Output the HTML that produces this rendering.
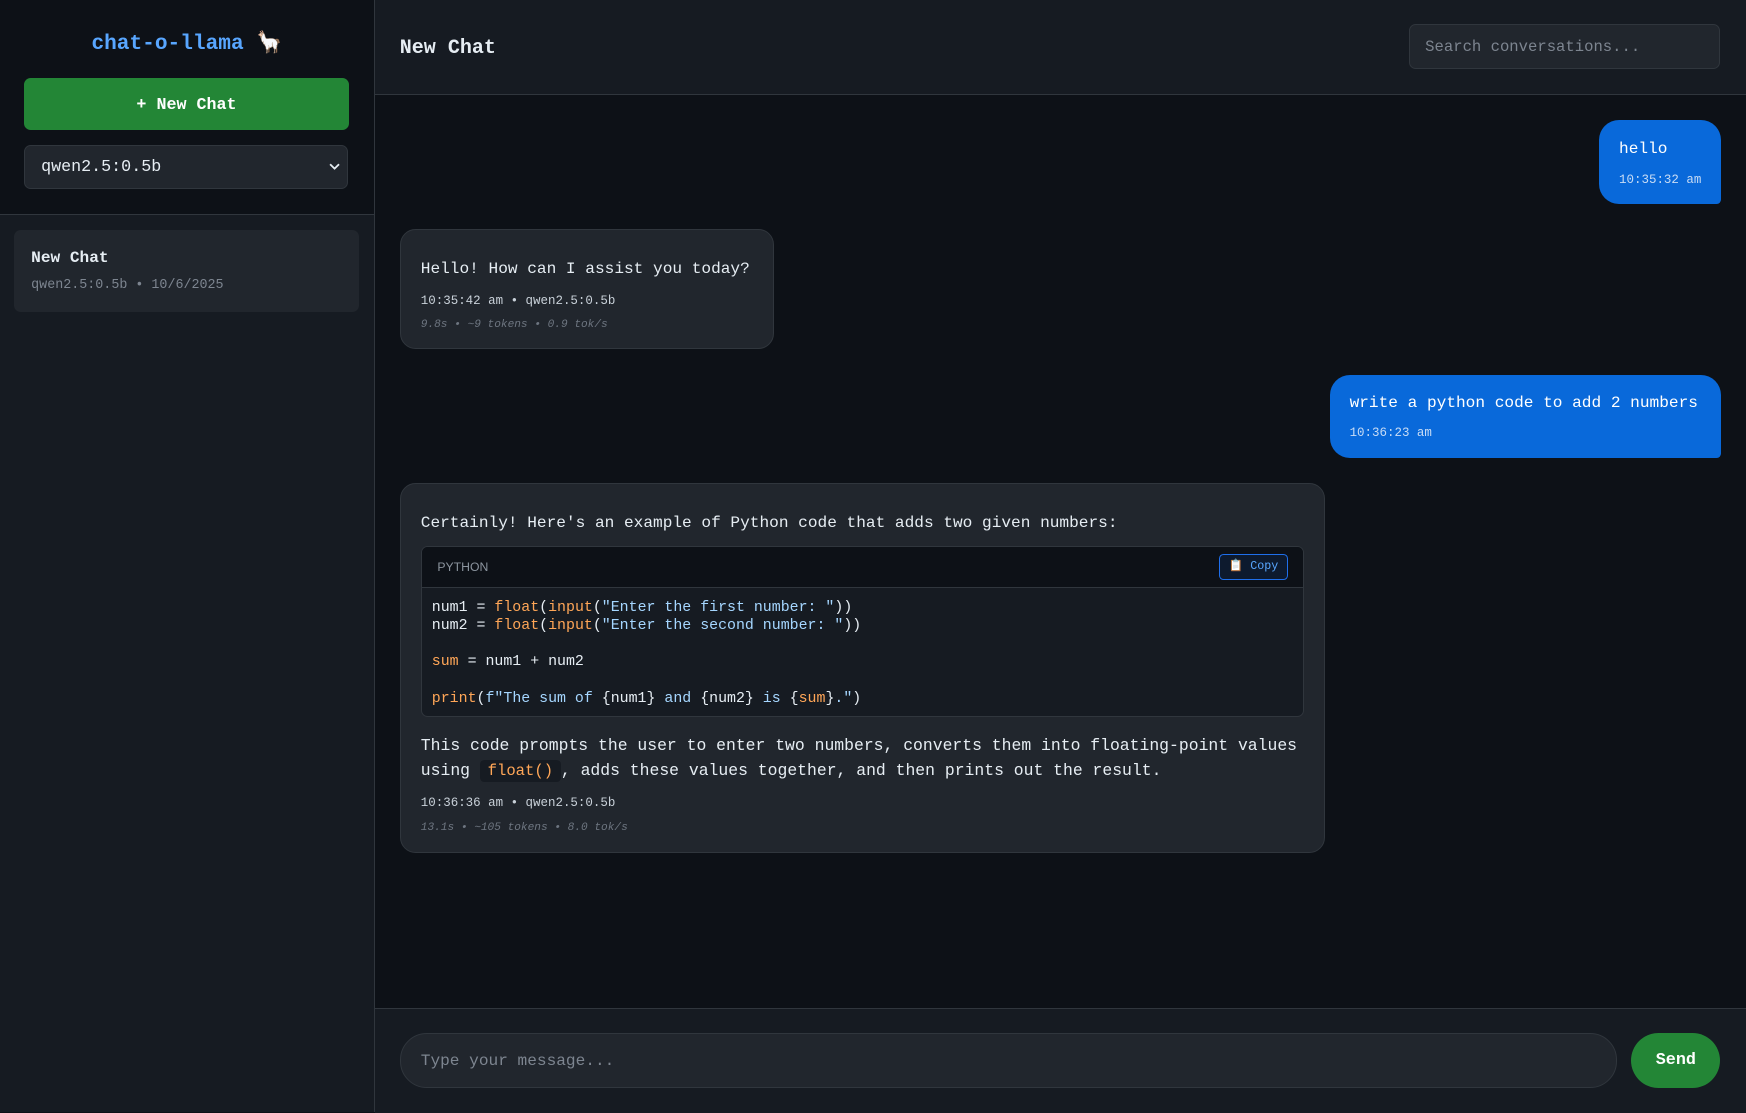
<!DOCTYPE html>
<html><head><meta charset="utf-8"><style>
html{zoom:1.11352}
body{margin:0;width:1568px;height:999px;background:#0d1117;font-family:"Liberation Mono","DejaVu Sans Mono",monospace;color:#e6edf3;position:relative;overflow:hidden}
.a{position:absolute}
.side{left:0;top:0;width:336px;height:999px;background:#161b22;border-right:1px solid #30363d}
.sidetop{left:0;top:0;width:336px;height:192px;background:#0d1117;border-bottom:1px solid #30363d}
.logo{left:0;top:26px;width:336px;text-align:center;font-size:19px;color:#58a6ff;font-weight:bold}
.btn{left:22px;top:70px;width:291px;height:47px;background:#238636;border-radius:6px;color:#fff;font-size:15px;font-weight:bold;text-align:center;line-height:50px}
.sel{left:22px;top:130px;height:38px;background:#21262d;border:1px solid #30363d;border-radius:6px;font-size:15px;line-height:40px;padding-left:14px;box-sizing:content-box;width:275px}
.item{left:13px;top:207px;width:309px;height:73px;background:#21262d;border-radius:6px}
.hdr{left:337px;top:0;width:1231px;height:84px;background:#161b22;border-bottom:1px solid #30363d}
.search{left:1265px;top:22px;width:264px;height:38px;background:#21262d;border:1px solid #30363d;border-radius:6px;font-size:14px;color:#7d8590;line-height:40px;padding-left:14px}
.ub{background:#0969da;border-radius:18px 18px 4px 18px;color:#fff}
.bb{background:#21262d;border:1px solid #30363d;border-radius:14px}
.meta{font-size:11.2px;color:#c9d1d9}
.st{font-size:10px;color:#6e7681;font-style:italic}
.foot{left:337px;top:905px;width:1231px;height:94px;background:#161b22;border-top:1px solid #30363d}
pre{margin:0;font-family:inherit;font-size:13.4px;line-height:16.3px;color:#e6edf3}
.o{color:#ffa657}.s{color:#a5d6ff}
</style></head><body>
<div class="a side"></div>
<div class="a sidetop"></div>
<div class="a logo">chat-o-llama <span style="font-family:'DejaVu Sans',sans-serif;color:#e8d8f0">🦙</span></div>
<div class="a btn">+ New Chat</div>
<div class="a sel">qwen2.5:0.5b<svg class="a" style="right:6px;top:15px" width="10" height="8" viewBox="0 0 10 8"><path d="M1 2l4 4 4-4" stroke="#e6edf3" stroke-width="1.6" fill="none"/></svg></div>
<div class="a item"><div class="a" style="left:15px;top:17px;font-size:14.5px;font-weight:bold">New Chat</div><div class="a" style="left:15px;top:43px;font-size:12px;color:#7d8590">qwen2.5:0.5b • 10/6/2025</div></div>
<div class="a hdr"></div>
<div class="a" style="left:359px;top:33px;font-size:18px;font-weight:bold">New Chat</div>
<div class="a search">Search conversations...</div>

<div class="a ub" style="left:1436px;top:108px;width:110px;height:75px"><div class="a" style="left:18px;top:18px;font-size:14.5px">hello</div><div class="a meta" style="left:18px;top:47px;color:#c8dcf5">10:35:32 am</div></div>

<div class="a bb" style="left:359px;top:206px;width:334px;height:106px"><div class="a" style="left:18px;top:27px;font-size:14.5px">Hello! How can I assist you today?</div><div class="a meta" style="left:18px;top:57px">10:35:42 am • qwen2.5:0.5b</div><div class="a st" style="left:18px;top:80px">9.8s • ~9 tokens • 0.9 tok/s</div></div>

<div class="a ub" style="left:1194px;top:337px;width:352px;height:74px"><div class="a" style="left:18px;top:17px;font-size:14.5px">write a python code to add 2 numbers</div><div class="a meta" style="left:18px;top:46px;color:#c8dcf5">10:36:23 am</div></div>

<div class="a bb" style="left:359px;top:434px;width:829px;height:330px">
<div class="a" style="left:18px;top:27px;font-size:14.5px">Certainly! Here's an example of Python code that adds two given numbers:</div>
<div class="a" style="left:18px;top:55px;width:791px;height:152px;background:#161b22;border:1px solid #30363d;border-radius:6px;overflow:hidden">
<div class="a" style="left:0;top:0;width:791px;height:36px;background:#0d1117;border-bottom:1px solid #30363d"></div>
<div class="a" style="left:14px;top:12px;font-family:'Liberation Sans',sans-serif;font-size:11px;color:#8b949e">PYTHON</div>
<div class="a" style="left:716px;top:7px;width:60px;height:21px;border:1px solid #1f6feb;background:#0d1a2e;border-radius:4px;font-size:10.5px;color:#58a6ff;line-height:21px;text-align:center">📋 Copy</div>
<pre class="a" style="left:9px;top:47px">num1 = <span class="o">float</span>(<span class="o">input</span>(<span class="s">"Enter the first number: "</span>))
num2 = <span class="o">float</span>(<span class="o">input</span>(<span class="s">"Enter the second number: "</span>))

<span class="o">sum</span> = num1 + num2

<span class="o">print</span>(<span class="s">f"The sum of </span>{num1}<span class="s"> and </span>{num2}<span class="s"> is </span>{<span class="o">sum</span>}<span class="s">."</span>)</pre>
</div>
<div class="a" style="left:18px;top:223px;font-size:14.75px;line-height:23px;width:800px">This code prompts the user to enter two numbers, converts them into floating-point values using <span style="background:#161b22;color:#ffa657;padding:2px 7px;border-radius:4px;font-size:14px">float()</span>, adds these values together, and then prints out the result.</div>
<div class="a meta" style="left:18px;top:280px">10:36:36 am • qwen2.5:0.5b</div>
<div class="a st" style="left:18px;top:303px">13.1s • ~105 tokens • 8.0 tok/s</div>
</div>

<div class="a foot"></div>
<div class="a" style="left:359px;top:928px;width:1091px;height:47px;background:#21262d;border:1px solid #30363d;border-radius:24px"><div class="a" style="left:18px;top:16px;font-size:14.5px;color:#7d8590">Type your message...</div></div>
<div class="a" style="left:1465px;top:928px;width:80px;height:49px;background:#238636;border-radius:25px;color:#fff;font-weight:bold;font-size:15px;text-align:center;line-height:51px">Send</div>
</body></html>
